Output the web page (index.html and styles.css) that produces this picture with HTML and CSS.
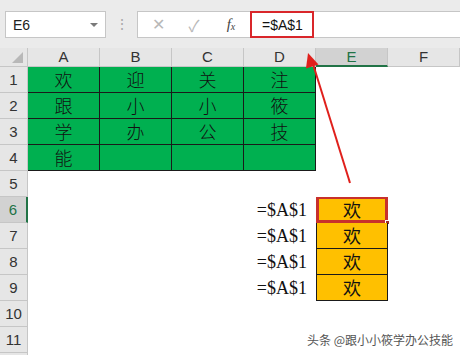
FILE: index.html
```html
<!DOCTYPE html>
<html lang="zh">
<head>
    <meta charset="UTF-8">
    <title>绝对引用</title>
    <link rel="stylesheet" href="styles.css">
</head>
<body>
<div class="page">

    <div class="toolbar">
        <div class="name_box">
            <span>E6</span>
            <i class="drop"></i>
        </div>
        <div class="dots">⋮</div>
        <div class="formula_bar">
            <span class="btn">✕</span>
            <span class="btn">✓</span>
            <span class="fx">f<sub>x</sub></span>
            <div class="formula">=$A$1</div>
        </div>
    </div>

    <div class="sheet">
        <!-- 列标题 -->
        <div class="corner"><i></i></div>
        <div class="col_head">A</div>
        <div class="col_head">B</div>
        <div class="col_head">C</div>
        <div class="col_head">D</div>
        <div class="col_head on">E</div>
        <div class="col_head">F</div>

        <div class="row_head">1</div>
        <div class="cell green">欢</div><div class="cell green">迎</div><div class="cell green">关</div><div class="cell green last">注</div>
        <div class="cell"></div><div class="cell"></div>

        <div class="row_head">2</div>
        <div class="cell green">跟</div><div class="cell green">小</div><div class="cell green">小</div><div class="cell green last">筱</div>
        <div class="cell"></div><div class="cell"></div>

        <div class="row_head">3</div>
        <div class="cell green">学</div><div class="cell green">办</div><div class="cell green">公</div><div class="cell green last">技</div>
        <div class="cell"></div><div class="cell"></div>

        <div class="row_head">4</div>
        <div class="cell green">能</div><div class="cell green"></div><div class="cell green"></div><div class="cell green last"></div>
        <div class="cell"></div><div class="cell"></div>

        <div class="row_head">5</div>
        <div class="cell"></div><div class="cell"></div><div class="cell"></div><div class="cell"></div><div class="cell"></div><div class="cell"></div>

        <div class="row_head on">6</div>
        <div class="cell"></div><div class="cell"></div><div class="cell"></div><div class="cell ref">=$A$1</div>
        <div class="cell orange active">欢<i class="handle"></i></div><div class="cell"></div>

        <div class="row_head">7</div>
        <div class="cell"></div><div class="cell"></div><div class="cell"></div><div class="cell ref">=$A$1</div>
        <div class="cell orange">欢</div><div class="cell"></div>

        <div class="row_head">8</div>
        <div class="cell"></div><div class="cell"></div><div class="cell"></div><div class="cell ref">=$A$1</div>
        <div class="cell orange">欢</div><div class="cell"></div>

        <div class="row_head">9</div>
        <div class="cell"></div><div class="cell"></div><div class="cell"></div><div class="cell ref">=$A$1</div>
        <div class="cell orange">欢</div><div class="cell"></div>

        <div class="row_head">10</div>
        <div class="cell"></div><div class="cell"></div><div class="cell"></div><div class="cell"></div><div class="cell"></div><div class="cell"></div>

        <div class="row_head">11</div>
        <div class="cell"></div><div class="cell"></div><div class="cell"></div><div class="cell"></div><div class="cell"></div><div class="cell"></div>

        <div class="row_head"></div>
        <div class="cell"></div><div class="cell"></div><div class="cell"></div><div class="cell"></div><div class="cell"></div><div class="cell"></div>
    </div>

    <!-- 红色箭头 -->
    <svg class="arrow" width="460" height="355" viewBox="0 0 460 355">
        <line x1="350" y1="183" x2="313" y2="64" stroke="#e0201c" stroke-width="2"/>
        <polygon points="308,53 318.5,64.5 306,68.5" fill="#e0201c"/>
    </svg>

    <div class="mark">头条 @跟小小筱学办公技能</div>
</div>
</body>
</html>
```

FILE: styles.css
```css
*{
    margin: 0;
    padding: 0;
    box-sizing: border-box;
}
body{
    background: #fff;
    font-family: "Liberation Sans", Arial, "Noto Sans CJK SC", sans-serif;
}
.page{
    width: 460px;
    height: 355px;
    position: relative;
    overflow: hidden;
}
.toolbar{
    height: 48px;
    background: #ebebeb;
    display: flex;
    padding: 11px 0 10px 5px;
}
.name_box{
    width: 101px;
    background: #fff;
    border: 1px solid #c6c6c6;
    display: flex;
    align-items: center;
    justify-content: space-between;
    padding: 0 7px 0 7px;
    font-size: 14px;
    color: #222;
}
.name_box .drop{
    width: 0;
    height: 0;
    border-left: 4px solid transparent;
    border-right: 4px solid transparent;
    border-top: 4px solid #7a7a7a;
}
.dots{
    width: 31px;
    text-align: center;
    color: #a8a8a8;
    font-size: 14px;
    line-height: 27px;
}
.formula_bar{
    flex: 1;
    background: #fff;
    border: 1px solid #c6c6c6;
    border-right: none;
    display: flex;
    align-items: center;
}
.formula_bar .btn{
    width: 36px;
    text-align: center;
    color: #b8b8b8;
    font-size: 16px;
}
.formula_bar .btn:first-child{
    margin-left: 2px;
}
.formula_bar .fx{
    width: 38px;
    text-align: center;
    font-family: "Liberation Serif", serif;
    font-style: italic;
    font-size: 15px;
    color: #444;
}
.formula_bar .fx sub{
    font-size: 10px;
    vertical-align: -1px;
}
.formula{
    align-self: stretch;
    margin: -1px 0;
    width: 64px;
    border: 2px solid #d9262a;
    font-size: 14px;
    color: #111;
    display: flex;
    align-items: center;
    padding-left: 10px;
}

/* 表格 */
.sheet{
    display: grid;
    grid-template-columns: 28px 72px 72px 72px 72px 72px 72px;
    grid-template-rows: 19px repeat(12, 26px);
}
.corner{
    background: #e6e6e6;
    border-right: 1px solid #c6c6c6;
    border-bottom: 1px solid #c6c6c6;
    position: relative;
}
.corner i{
    position: absolute;
    right: 4px;
    bottom: 3px;
    width: 0;
    height: 0;
    border-left: 11px solid transparent;
    border-bottom: 11px solid #b8b8b8;
}
.col_head{
    background: #e6e6e6;
    border-right: 1px solid #c6c6c6;
    border-bottom: 1px solid #c6c6c6;
    text-align: center;
    font-size: 15px;
    line-height: 18px;
    color: #333;
}
.col_head.on{
    background: #d2d2d2;
    border-bottom: 2px solid #217346;
    color: #217346;
}
.row_head{
    background: #e6e6e6;
    border-right: 1px solid #c6c6c6;
    border-bottom: 1px solid #c6c6c6;
    text-align: center;
    font-size: 15px;
    line-height: 25px;
    color: #333;
}
.row_head.on{
    background: #d2d2d2;
    border-right: 2px solid #217346;
    color: #217346;
}
.cell{
    font-family: "Noto Sans CJK SC", sans-serif;
    font-size: 18px;
    line-height: 25px;
    text-align: center;
    color: #111;
    position: relative;
}
.green{
    background: #00b050;
    border-right: 1px solid #1a1a1a;
    border-bottom: 1px solid #1a1a1a;
    font-weight: 300;
}
.orange{
    background: #ffc000;
    border-right: 1px solid #1a1a1a;
    border-bottom: 1px solid #1a1a1a;
    border-left: 1px solid #1a1a1a;
}
.active{
    box-shadow: inset 0 0 0 2px #c8302c;
    border-color: #c8302c;
}
.active .handle{
    position: absolute;
    right: -3px;
    bottom: -3px;
    width: 5px;
    height: 5px;
    background: #a0302c;
    border: 1px solid #fff;
}
.ref{
    font-family: "Liberation Serif", serif;
    font-size: 18px;
    text-align: right;
    padding-right: 9px;
    line-height: 26px;
}

.arrow{
    position: absolute;
    left: 0;
    top: 0;
    pointer-events: none;
}
.mark{
    position: absolute;
    left: 307px;
    top: 332px;
    font-family: "Noto Sans CJK SC", sans-serif;
    font-size: 12px;
    line-height: 16px;
    white-space: nowrap;
    color: #555;
}
```
